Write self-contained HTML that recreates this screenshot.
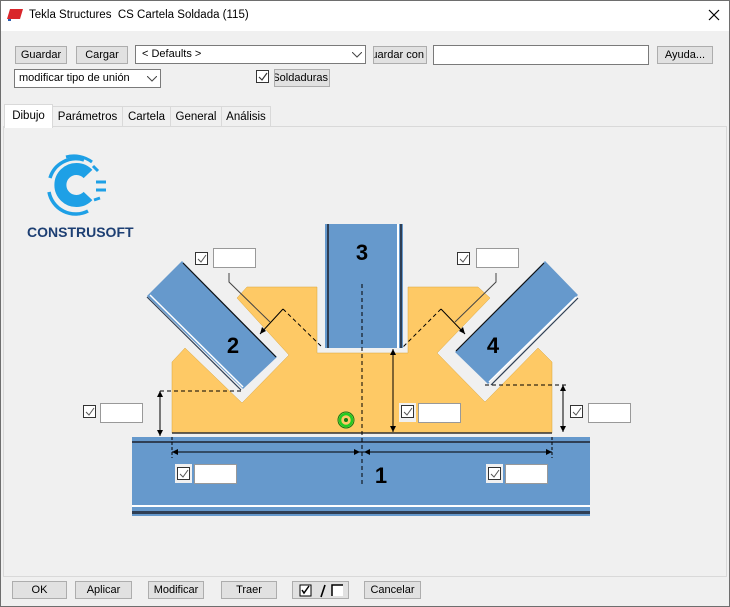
<!DOCTYPE html>
<html><head><meta charset="utf-8"><style>
*{box-sizing:border-box;margin:0;padding:0}
body{width:730px;height:607px;background:#f0f0f0;font-family:"Liberation Sans",sans-serif;font-size:12px;color:#000;position:relative;overflow:hidden}
.a{position:absolute}
.btn{position:absolute;background:#e1e1e1;border:1px solid #adadad;text-align:center;font-size:11px;line-height:17px;white-space:nowrap;overflow:hidden}
.inp{position:absolute;background:#fff;border:1px solid #7a7a7a}
.tab{position:absolute;top:106px;height:21px;border:1px solid #d9d9d9;border-bottom:none;background:#f0f0f0;font-size:11.5px;line-height:20px;text-align:center}
</style></head><body>
<div class="a" style="left:0;top:0;width:730px;height:607px;border:1px solid #6e6e6e"></div>
<div class="a" style="left:1px;top:1px;width:728px;height:30px;background:#fff"></div>
<svg class="a" style="left:7px;top:8px" width="18" height="14"><polygon points="3,1 16,1 13,11 0,11" fill="#d9262b"/><rect x="1" y="11" width="3" height="2" fill="#2a5db0"/></svg>
<div class="a" style="left:29px;top:9px;font-size:11.5px">Tekla Structures&nbsp; CS Cartela Soldada (115)</div>
<svg class="a" style="left:708px;top:9px" width="12" height="12"><path d="M1 1L11 11M11 1L1 11" stroke="#000" stroke-width="1.2"/></svg>

<div class="btn" style="left:15px;top:46px;width:52px;height:18px">Guardar</div>
<div class="btn" style="left:76px;top:46px;width:52px;height:18px">Cargar</div>
<div class="inp" style="left:135px;top:45px;width:231px;height:19px;padding-left:6px;line-height:17px;font-size:11px">&lt; Defaults &gt;<svg class="a" style="left:216px;top:6px" width="10" height="6"><path d="M0 0L5 5L10 0" stroke="#444" fill="none"/></svg></div>
<div class="btn" style="left:373px;top:46px;width:54px;height:18px"><span class="a" style="right:2px;top:0">Guardar con</span></div>
<div class="inp" style="left:433px;top:45px;width:216px;height:20px"></div>
<div class="btn" style="left:657px;top:46px;width:56px;height:18px">Ayuda...</div>

<div class="inp" style="left:14px;top:69px;width:147px;height:19px;padding-left:4px;line-height:17px;font-size:11px">modificar tipo de unión<svg class="a" style="left:132px;top:6px" width="10" height="6"><path d="M0 0L5 5L10 0" stroke="#444" fill="none"/></svg></div>
<div class="inp" style="left:256px;top:70px;width:13px;height:13px;border-color:#333"><svg class="a" style="left:1px;top:1px" width="10" height="10"><path d="M1 5L4 8L9 1" stroke="#333" fill="none" stroke-width="1.2"/></svg></div>
<div class="btn" style="left:274px;top:69px;width:56px;height:18px"><span class="a" style="right:1px;top:0">Soldaduras</span></div>

<div class="tab" style="left:52px;width:71px">Parámetros</div>
<div class="tab" style="left:122px;width:49px">Cartela</div>
<div class="tab" style="left:170px;width:52px">General</div>
<div class="tab" style="left:221px;width:50px">Análisis</div>
<div class="a" style="left:3px;top:126px;width:724px;height:451px;border:1px solid #d9d9d9;background:#f0f0f0"></div>
<div class="tab" style="left:4px;top:104px;width:49px;height:24px;background:#fff;border-color:#d9d9d9;line-height:23px;z-index:2">Dibujo</div>
<div class="a" style="left:4px;top:127px;width:722px;height:449px;background:#f0f0f0;border:none"></div>

<svg class="a" style="left:0;top:0" width="730" height="607">
<!-- logo -->
<g fill="none" stroke="#1ea0e6">
<path d="M88 174 A16 16 0 1 0 88 196" stroke-width="12"/>
<path d="M84 160 A27 27 0 0 0 50 178" stroke-width="3.5"/>
<path d="M49 192 A27 27 0 0 0 88 211" stroke-width="3.5"/>
<path d="M66 157 A30 30 0 0 1 92 162" stroke-width="3"/>
<path d="M93 166 L98 171 M96 182 L106 182 M96 190 L106 190 M94 200 L100 198" stroke-width="3"/>
<path d="M56 206 A30 30 0 0 0 80 214" stroke-width="2.5"/>
</g>
<text x="27" y="237" font-family="Liberation Sans,sans-serif" font-weight="bold" font-size="14" fill="#1d3f73">CONSTRUSOFT</text>

<!-- gusset -->
<polygon points="172,433 172,362 185,348 242,403 289,355 237,298 247,287 317,287 317,353 408,353 408,287 478,287 490,298 437,353 485,402 538,348 552,362 552,433" fill="#fec965" stroke="#d9a53a" stroke-width="0.5"/>
<line x1="172" y1="433" x2="552" y2="433" stroke="#333" stroke-width="1.5"/>

<!-- beam 1 -->
<rect x="132" y="437" width="458" height="79" fill="#6699cc"/>
<rect x="132" y="441" width="458" height="2" fill="#2f3f55"/>
<rect x="132" y="505" width="458" height="2" fill="#fff"/>
<rect x="132" y="511" width="458" height="3" fill="#2f3f55"/>

<!-- beam 3 -->
<rect x="325" y="224" width="78" height="124" fill="#6699cc"/>
<rect x="327" y="224" width="2" height="124" fill="#2f3f55"/>
<rect x="397" y="224" width="2" height="124" fill="#fff"/>
<rect x="400" y="224" width="2" height="124" fill="#2f3f55"/>

<!-- beam 2 -->
<polygon points="182,261 277,357 243,389 147,296" fill="#6699cc"/>
<line x1="183" y1="263" x2="276" y2="357" stroke="#111" stroke-width="1.2"/>
<line x1="150" y1="295" x2="243" y2="387" stroke="#fff" stroke-width="1.5"/>
<line x1="147" y1="297" x2="241" y2="390" stroke="#2f3f55" stroke-width="1.2"/>

<!-- beam 4 -->
<polygon points="545,261 578,295 488,384 455,352" fill="#6699cc"/>
<line x1="544" y1="263" x2="456" y2="351" stroke="#111" stroke-width="1.2"/>
<line x1="576" y1="297" x2="489" y2="382" stroke="#fff" stroke-width="1.5"/>
<line x1="578" y1="298" x2="491" y2="385" stroke="#2f3f55" stroke-width="1.2"/>

<g font-family="Liberation Sans,sans-serif" font-weight="bold" font-size="22" fill="#000" text-anchor="middle">
<text x="362" y="260">3</text><text x="233" y="353">2</text><text x="493" y="353">4</text><text x="381" y="483">1</text>
</g>

<!-- dims -->
<g stroke="#000" stroke-width="1" fill="none">
<line x1="362" y1="284" x2="362" y2="487" stroke-dasharray="4,3"/>
<line x1="172" y1="437" x2="172" y2="458" stroke-dasharray="3,2"/>
<line x1="552" y1="437" x2="552" y2="458" stroke-dasharray="3,2"/>
<line x1="172" y1="452" x2="552" y2="452"/>
<line x1="160" y1="391" x2="160" y2="436"/>
<line x1="160" y1="391" x2="242" y2="391" stroke-dasharray="4,3"/>
<line x1="563" y1="385" x2="563" y2="432"/>
<line x1="485" y1="385" x2="567" y2="385" stroke-dasharray="4,3"/>
<line x1="393" y1="349" x2="393" y2="432"/>
<line x1="283" y1="309" x2="260" y2="334"/>
<line x1="283" y1="309" x2="323" y2="348" stroke-dasharray="4,3"/>
<polyline points="229,273 229,282 270,322" stroke="#444"/>
<line x1="441" y1="309" x2="465" y2="334"/>
<line x1="441" y1="309" x2="402" y2="348" stroke-dasharray="4,3"/>
<polyline points="496,273 496,282 455,322" stroke="#444"/>
</g>
<g fill="#000">
<polygon points="172,452 178,449 178,455"/><polygon points="360,452 354,449 354,455"/><polygon points="364,452 370,449 370,455"/><polygon points="552,452 546,449 546,455"/>
<polygon points="160,391 157,397 163,397"/><polygon points="160,436 157,430 163,430"/>
<polygon points="563,385 560,391 566,391"/><polygon points="563,432 560,426 566,426"/>
<polygon points="393,349 390,355 396,355"/><polygon points="393,432 390,426 396,426"/>
<polygon points="260,334 262,327 266,331"/><polygon points="465,334 463,327 459,331"/>
</g>
<circle cx="346" cy="420" r="8" fill="none" stroke="#117a11" stroke-width="1"/>
<circle cx="346" cy="420" r="6" fill="none" stroke="#22cc22" stroke-width="2.5"/>
<circle cx="346" cy="420" r="2" fill="#117a11"/>
</svg>

<!-- checkbox + input pairs -->
<div class="a" style="left:195px;top:252px;width:13px;height:13px;border:1px solid #333;background:#fff"><svg class="a" style="left:1px;top:1px" width="10" height="10"><path d="M1 5L4 8L9 1" stroke="#555" fill="none"/></svg></div>
<div class="inp" style="left:213px;top:248px;width:43px;height:20px;border-color:#999"></div>
<div class="a" style="left:457px;top:252px;width:13px;height:13px;border:1px solid #333;background:#fff"><svg class="a" style="left:1px;top:1px" width="10" height="10"><path d="M1 5L4 8L9 1" stroke="#555" fill="none"/></svg></div>
<div class="inp" style="left:476px;top:248px;width:43px;height:20px;border-color:#999"></div>
<div class="a" style="left:83px;top:405px;width:13px;height:13px;border:1px solid #333;background:#fff"><svg class="a" style="left:1px;top:1px" width="10" height="10"><path d="M1 5L4 8L9 1" stroke="#555" fill="none"/></svg></div>
<div class="inp" style="left:100px;top:403px;width:43px;height:20px;border-color:#999"></div>
<div class="a" style="left:399px;top:403px;width:17px;height:19px;background:#f0f0f0"></div>
<div class="a" style="left:401px;top:405px;width:13px;height:13px;border:1px solid #333;background:#fff"><svg class="a" style="left:1px;top:1px" width="10" height="10"><path d="M1 5L4 8L9 1" stroke="#555" fill="none"/></svg></div>
<div class="inp" style="left:418px;top:403px;width:43px;height:20px;border-color:#999"></div>
<div class="a" style="left:570px;top:405px;width:13px;height:13px;border:1px solid #333;background:#fff"><svg class="a" style="left:1px;top:1px" width="10" height="10"><path d="M1 5L4 8L9 1" stroke="#555" fill="none"/></svg></div>
<div class="inp" style="left:588px;top:403px;width:43px;height:20px;border-color:#999"></div>
<div class="a" style="left:175px;top:464px;width:17px;height:19px;background:#f0f0f0"></div>
<div class="a" style="left:177px;top:467px;width:13px;height:13px;border:1px solid #333;background:#fff"><svg class="a" style="left:1px;top:1px" width="10" height="10"><path d="M1 5L4 8L9 1" stroke="#555" fill="none"/></svg></div>
<div class="inp" style="left:194px;top:464px;width:43px;height:20px;border-color:#999"></div>
<div class="a" style="left:486px;top:464px;width:17px;height:19px;background:#f0f0f0"></div>
<div class="a" style="left:488px;top:467px;width:13px;height:13px;border:1px solid #333;background:#fff"><svg class="a" style="left:1px;top:1px" width="10" height="10"><path d="M1 5L4 8L9 1" stroke="#555" fill="none"/></svg></div>
<div class="inp" style="left:505px;top:464px;width:43px;height:20px;border-color:#999"></div>

<!-- bottom buttons -->
<div class="btn" style="left:12px;top:581px;width:55px;height:18px">OK</div>
<div class="btn" style="left:75px;top:581px;width:57px;height:18px">Aplicar</div>
<div class="btn" style="left:148px;top:581px;width:56px;height:18px">Modificar</div>
<div class="btn" style="left:221px;top:581px;width:56px;height:18px">Traer</div>
<div class="btn" style="left:292px;top:581px;width:57px;height:18px"><svg class="a" style="left:6px;top:2px" width="44" height="14"><rect x="1" y="1" width="11" height="11" fill="#fff" stroke="#000"/><path d="M3 6L5 9L10 2" stroke="#000" fill="none" stroke-width="1.5"/><path d="M22 13L26 1" stroke="#000" stroke-width="1.6"/><rect x="33" y="1" width="11" height="11" fill="#fff"/><path d="M33 12V1H44" stroke="#000" fill="none" stroke-width="1.5"/></svg></div>
<div class="btn" style="left:364px;top:581px;width:57px;height:18px">Cancelar</div>
</body></html>
